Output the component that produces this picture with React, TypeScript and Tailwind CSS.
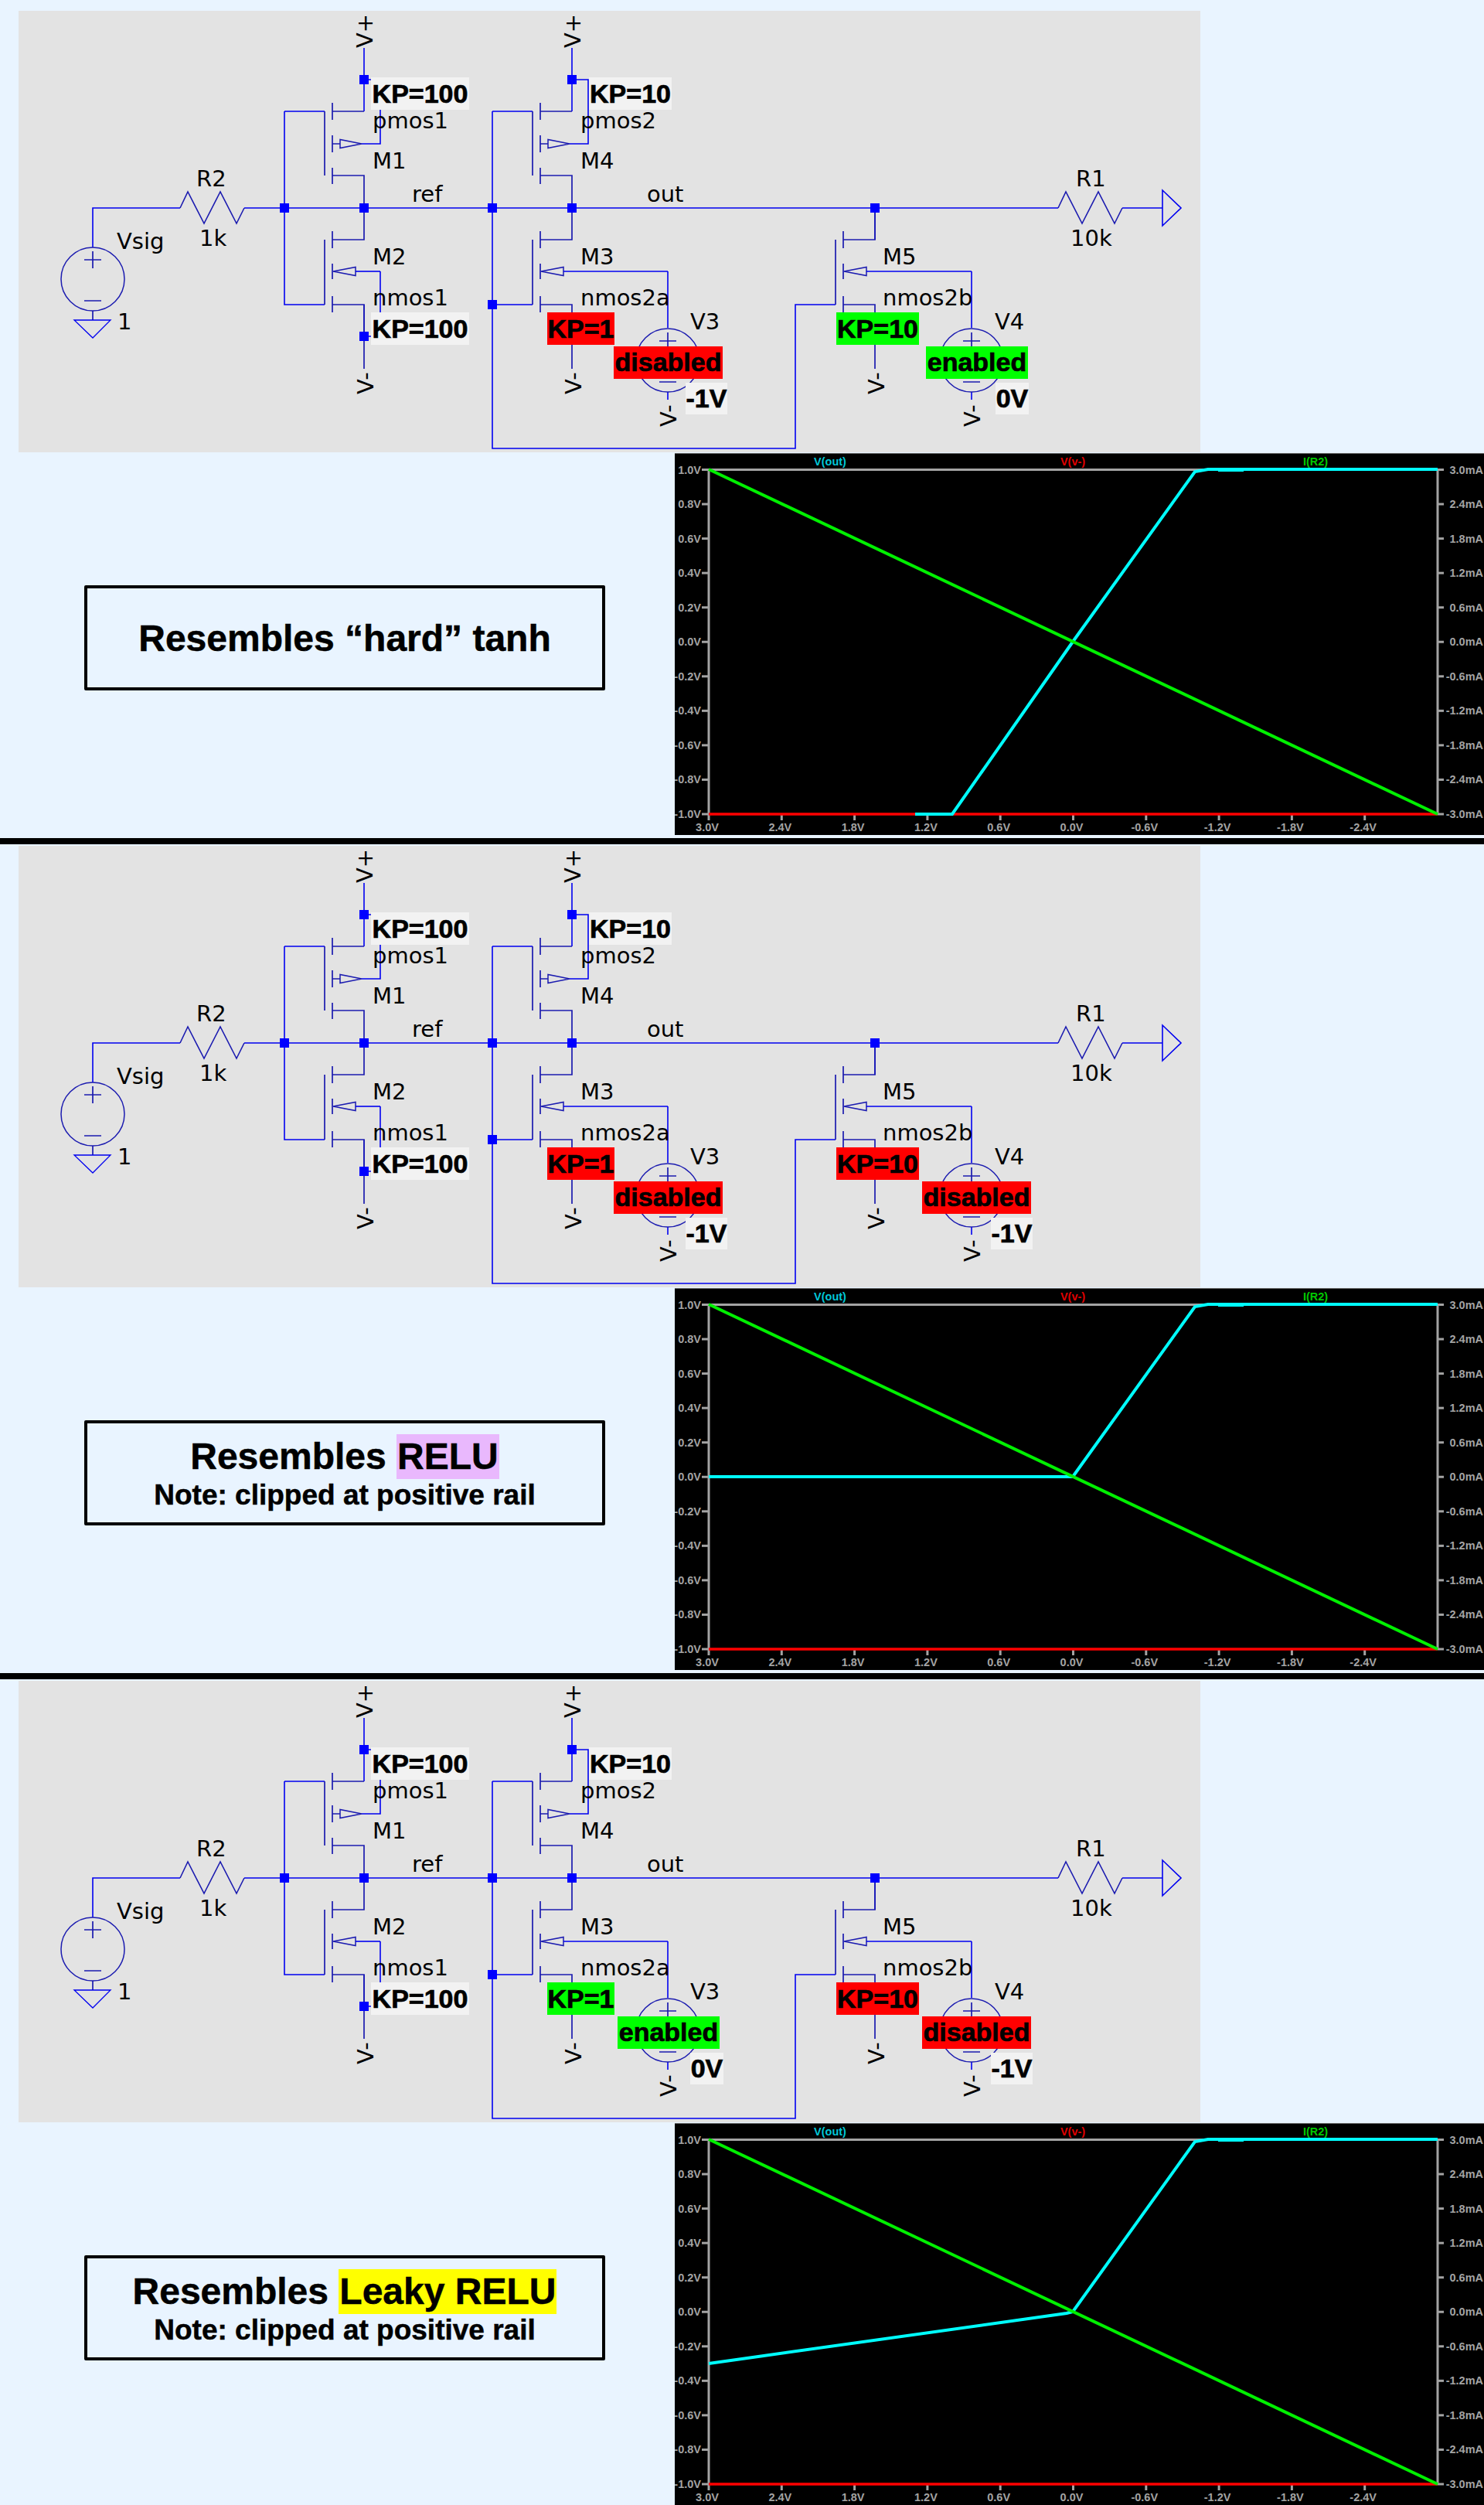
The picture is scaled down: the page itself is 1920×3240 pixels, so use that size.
import React from 'react';

const WIRE = '#0000f0';
const BODY = '#1c1cb0';

const schemText = "font-['DejaVu_Sans',sans-serif] font-normal text-[29px]";
const kpText = "font-['Liberation_Sans',Arial,sans-serif] font-bold text-[34px]";
const axisText = "font-['Liberation_Sans',Arial,sans-serif] font-bold text-[14.5px]";

const Wire = ({ d }: { d: string }) => <path d={d} fill="none" stroke={WIRE} strokeWidth={1.6} />;
const Part = ({ d }: { d: string }) => <path d={d} fill="none" stroke={BODY} strokeWidth={1.7} />;

const Node = ({ x, y }: { x: number; y: number }) => <rect x={x - 6} y={y - 6} width={12} height={12} fill="#0000ff" />;

const Label = ({ x, y, children }: { x: number; y: number; children: React.ReactNode }) => (
  <text x={x} y={y} className={schemText} fill="#000">{children}</text>
);

// rotated net name, reads bottom to top
const Rail = ({ x, y, children }: { x: number; y: number; children: string }) => (
  <text x={x} y={y} transform={`rotate(-90 ${x} ${y})`} className={schemText} fill="#000">{children}</text>
);

const Tag = ({ x, y, w, h = 42, base, bg, children }: { x: number; y: number; w: number; h?: number; base: number; bg: string; children: string }) => (
  <g>
    <rect x={x} y={y} width={w} height={h} fill={bg} />
    <text x={x + w / 2} y={base} textAnchor="middle" className={kpText} fill="#000" stroke="#000" strokeWidth={0.7}>{children}</text>
  </g>
);

const Pmos = ({ dx }: { dx: number }) => (
  <g>
    <Part d={`M${420 + dx} 144V227 M${430 + dx} 133V155 M${430 + dx} 175V197 M${430 + dx} 217V238`} />
    <Part d={`M${430 + dx} 144H${471 + dx} M${430 + dx} 227H${471 + dx} V269 M${430 + dx} 186H${440 + dx}`} />
    <path d={`M${440 + dx} 180.5V191.5L${468 + dx} 186Z`} fill="none" stroke={BODY} strokeWidth={1.5} />
    <Wire d={`M${468 + dx} 186H${492 + dx}V103H${471 + dx}`} />
  </g>
);

const Nmos = ({ dx, bulkTo }: { dx: number; bulkTo?: number }) => (
  <g>
    <Part d={`M${420 + dx} 310V394 M${430 + dx} 299V321 M${430 + dx} 341V361 M${430 + dx} 383V404`} />
    <Part d={`M${430 + dx} 310H${471 + dx}V269 M${430 + dx} 394H${471 + dx}V477`} />
    <path d={`M${431 + dx} 351L${460 + dx} 345.5V356.5Z`} fill="none" stroke={BODY} strokeWidth={1.5} />
    <Wire d={`M${460 + dx} 351H${bulkTo ?? 492 + dx}`} />
  </g>
);

const Source = ({ x, y }: { x: number; y: number }) => (
  <g>
    <circle cx={x} cy={y} r={41} fill="none" stroke={BODY} strokeWidth={1.5} />
    <Part d={`M${x - 11} ${y - 25}H${x + 11} M${x} ${y - 36}V${y - 14} M${x - 11} ${y + 28}H${x + 11}`} />
  </g>
);

const Resistor = ({ x }: { x: number }) => (
  <path
    d={`M${x} 269L${x + 10} 248L${x + 31} 289L${x + 52} 248L${x + 73} 289L${x + 83} 269`}
    fill="none"
    stroke={BODY}
    strokeWidth={1.6}
  />
);

interface SchematicProps {
  m3: { bg: string };
  m5: { bg: string };
  v3: boolean;
  v4: boolean;
}

const RED = '#ff0000';
const GREEN = '#00ff00';
const PALE = '#f2f2f2';

const Schematic = ({ m3, m5, v3, v4 }: SchematicProps) => (
  <svg viewBox="24 14 1529 571" className="block w-[1529px] h-[571px]">
    {/* wires */}
    <Wire d="M120 320V269H233 M316 269H1369 M1452 269H1504" />
    <Wire d="M368 144V394H420 M368 144H420" />
    <Wire d="M637 144H689 M637 144V580H1029V394H1081 M637 394H689" />
    <Wire d="M471 62V144 M740 62V144" />
    <Wire d="M1132 269V310" />
    <Wire d="M471 394V435H492V351" />
    <Wire d="M864 351V424 M864 507V517 M1257 351V424 M1257 507V517" />
    <path d="M1504 246V292L1528 269Z" fill="none" stroke={WIRE} strokeWidth={1.6} />

    {/* parts */}
    <Pmos dx={0} />
    <Pmos dx={269} />
    <Nmos dx={0} />
    <Nmos dx={269} bulkTo={864} />
    <Nmos dx={661} bulkTo={1257} />
    <Resistor x={233} />
    <Resistor x={1369} />
    <Source x={120} y={361} />
    <Source x={864} y={466} />
    <Source x={1257} y={466} />
    <Part d="M120 402V414" />
    <path d="M96 414H143L120 437Z" fill="none" stroke={WIRE} strokeWidth={1.3} />

    {[[471, 103], [740, 103], [368, 269], [471, 269], [637, 269], [740, 269], [1132, 269], [637, 394], [471, 435]].map(([x, y]) => (
      <Node key={`${x}-${y}`} x={x} y={y} />
    ))}

    {/* names */}
    <Label x={254} y={241}>R2</Label>
    <Label x={258} y={318}>1k</Label>
    <Label x={151} y={322}>Vsig</Label>
    <Label x={152} y={426}>1</Label>
    <Label x={482} y={166}>pmos1</Label>
    <Label x={482} y={218}>M1</Label>
    <Label x={533} y={261}>ref</Label>
    <Label x={482} y={342}>M2</Label>
    <Label x={482} y={395}>nmos1</Label>
    <Label x={751} y={166}>pmos2</Label>
    <Label x={751} y={218}>M4</Label>
    <Label x={837} y={261}>out</Label>
    <Label x={751} y={342}>M3</Label>
    <Label x={751} y={395}>nmos2a</Label>
    <Label x={893} y={426}>V3</Label>
    <Label x={1142} y={342}>M5</Label>
    <Label x={1142} y={395}>nmos2b</Label>
    <Label x={1287} y={426}>V4</Label>
    <Label x={1392} y={241}>R1</Label>
    <Label x={1385} y={318}>10k</Label>

    <Rail x={482} y={62}>V+</Rail>
    <Rail x={751} y={62}>V+</Rail>
    <Rail x={483} y={510}>V-</Rail>
    <Rail x={752} y={510}>V-</Rail>
    <Rail x={1144} y={510}>V-</Rail>
    <Rail x={875} y={552}>V-</Rail>
    <Rail x={1268} y={552}>V-</Rail>

    {/* parameter tags */}
    <Tag x={480} y={100} w={127} base={133} bg={PALE}>KP=100</Tag>
    <Tag x={762} y={100} w={107} base={133} bg={PALE}>KP=10</Tag>
    <Tag x={480} y={404} w={127} base={437} bg={PALE}>KP=100</Tag>
    <Tag x={708} y={404} w={87} base={437} bg={m3.bg}>KP=1</Tag>
    <Tag x={1082} y={404} w={107} base={437} bg={m5.bg}>KP=10</Tag>
    {v3 ? (
      <>
        <Tag x={799} y={448} w={132} base={480} bg={GREEN}>enabled</Tag>
        <Tag x={893} y={495} w={43} h={41} base={527} bg={PALE}>0V</Tag>
      </>
    ) : (
      <>
        <Tag x={794} y={448} w={141} base={480} bg={RED}>disabled</Tag>
        <Tag x={887} y={495} w={54} h={41} base={527} bg={PALE}>-1V</Tag>
      </>
    )}
    {v4 ? (
      <>
        <Tag x={1198} y={448} w={132} base={480} bg={GREEN}>enabled</Tag>
        <Tag x={1288} y={495} w={43} h={41} base={527} bg={PALE}>0V</Tag>
      </>
    ) : (
      <>
        <Tag x={1193} y={448} w={141} base={480} bg={RED}>disabled</Tag>
        <Tag x={1282} y={495} w={54} h={41} base={527} bg={PALE}>-1V</Tag>
      </>
    )}
  </svg>
);

const Y_LEFT = ['1.0V', '0.8V', '0.6V', '0.4V', '0.2V', '0.0V', '-0.2V', '-0.4V', '-0.6V', '-0.8V', '-1.0V'];
const Y_RIGHT = ['3.0mA', '2.4mA', '1.8mA', '1.2mA', '0.6mA', '0.0mA', '-0.6mA', '-1.2mA', '-1.8mA', '-2.4mA', '-3.0mA'];
const X_LABELS = ['3.0V', '2.4V', '1.8V', '1.2V', '0.6V', '0.0V', '-0.6V', '-1.2V', '-1.8V', '-2.4V'];
const GRAY = '#a3a3a3';

const Chart = ({ cyan }: { cyan: string }) => (
  <svg viewBox="873 586 1047 494" className="block w-[1047px] h-[494px] bg-black">
    <line x1={873} y1={586.5} x2={1920} y2={586.5} stroke="#666" strokeWidth={1} />
    <path d="M917 1053V607.5H1860V1053" fill="none" stroke={GRAY} strokeWidth={3} />

    {Y_LEFT.map((t, i) => {
      const y = 607.5 + i * 44.55;
      return (
        <g key={t}>
          <line x1={908} y1={y} x2={917} y2={y} stroke={GRAY} strokeWidth={3} />
          <text x={907} y={y + 5} textAnchor="end" className={axisText} fill={GRAY}>{t}</text>
        </g>
      );
    })}
    {Y_RIGHT.map((t, i) => {
      const y = 607.5 + i * 44.55;
      return (
        <g key={t}>
          <line x1={1860} y1={y} x2={1868} y2={y} stroke={GRAY} strokeWidth={3} />
          <text x={1919} y={y + 5} textAnchor="end" className={axisText} fill={GRAY}>{t}</text>
        </g>
      );
    })}
    {X_LABELS.map((t, i) => {
      const x = 917 + i * 94.3;
      return (
        <g key={t}>
          <line x1={x} y1={1053} x2={x} y2={1061} stroke={GRAY} strokeWidth={3} />
          <text x={x - 2} y={1075} textAnchor="middle" className={axisText} fill={GRAY}>{t}</text>
        </g>
      );
    })}

    <text x={1074} y={602} textAnchor="middle" className={axisText} fill="#00c8d8">V(out)</text>
    <text x={1388} y={602} textAnchor="middle" className={axisText} fill="#e00000">V(v-)</text>
    <text x={1702} y={602} textAnchor="middle" className={axisText} fill="#00c800">I(R2)</text>

    <line x1={917} y1={1053} x2={1860} y2={1053} stroke="#ff0000" strokeWidth={3.5} />
    <polyline points={cyan} fill="none" stroke="#00ffff" strokeWidth={4} />
    <line x1={1576} y1={608.5} x2={1609} y2={608.5} stroke="#00ffff" strokeWidth={3} />
    <line x1={917} y1={607} x2={1860} y2={1053} stroke="#00f000" strokeWidth={4} />
  </svg>
);

const Note = () => <div className="text-[37px] leading-[42px]">Note: clipped at positive rail</div>;

const SECTIONS = [
  {
    m3: { bg: RED },
    m5: { bg: GREEN },
    v3: false,
    v4: true,
    cyan: '1184,1053 1232,1053 1388,830 1546,610 1563,607 1860,607',
    caption: <div className="mt-[2px] text-[48px] leading-[58px]">Resembles “hard” tanh</div>,
  },
  {
    m3: { bg: RED },
    m5: { bg: RED },
    v3: false,
    v4: false,
    cyan: '917,830 1388,830 1546,610 1563,607 1860,607',
    caption: (
      <>
        <div className="text-[48px] leading-[58px]">
          Resembles <span className="inline-block bg-[#e9b8fd] px-px">RELU</span>
        </div>
        <Note />
      </>
    ),
  },
  {
    m3: { bg: GREEN },
    m5: { bg: RED },
    v3: true,
    v4: false,
    cyan: '917,897 1380,832 1388,830 1546,610 1563,607 1860,607',
    caption: (
      <>
        <div className="text-[48px] leading-[58px]">
          Resembles <span className="inline-block bg-[#ffff00] px-px">Leaky RELU</span>
        </div>
        <Note />
      </>
    ),
  },
];

export default function App() {
  return (
    <div className="w-[1920px] h-[3240px] overflow-hidden bg-[#e9f4ff] pt-[12px] font-['Liberation_Sans',Arial,sans-serif] font-bold text-black">
      {SECTIONS.map((s, i) => (
        <section key={i} className="pt-[2px]">
          <div className="ml-[24px] w-[1529px] h-[571px] bg-[#e3e3e3]">
            <Schematic m3={s.m3} m5={s.m5} v3={s.v3} v4={s.v4} />
          </div>
          <div className="flex mt-px">
            <div className="w-[873px] pl-[109px] pt-[171px]">
              <div className="flex flex-col items-center justify-center w-[674px] h-[136px] border-4 border-black rounded-[2px] [-webkit-text-stroke:0.5px_black]">
                {s.caption}
              </div>
            </div>
            <Chart cyan={s.cyan} />
          </div>
          {i < 2 && <div className="mt-[4px] h-[8px] bg-black" />}
        </section>
      ))}
    </div>
  );
}
